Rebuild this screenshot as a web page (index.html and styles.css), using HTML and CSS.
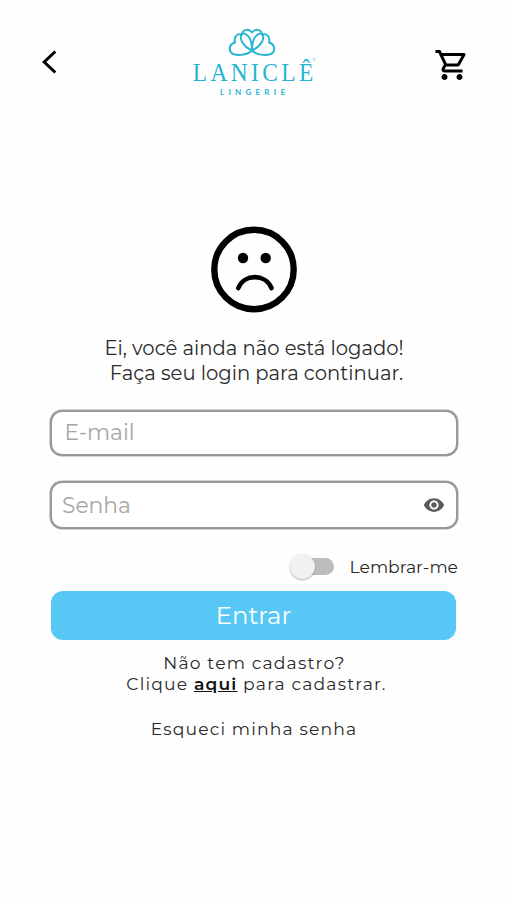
FILE: index.html
```html
<!DOCTYPE html>
<html lang="pt-BR">
<head>
  <meta charset="UTF-8" />
  <meta name="viewport" content="width=device-width, initial-scale=1.0" />
  <title>Laniclê Lingerie</title>
  <link rel="stylesheet" href="styles.css">
</head>
<body>
  <header class="topbar">
    <a href="#" class="back" aria-label="Voltar">
      <svg width="18" height="28" viewBox="0 0 18 28"><path d="M15.3 3.5 4.2 14l11.1 10.5" fill="none" stroke="#000" stroke-width="3"/></svg>
    </a>
    <svg class="logo" width="130" height="74" viewBox="0 0 130 74">
      <g fill="none" stroke="#27b4d2" stroke-width="1.9" stroke-linecap="round" stroke-linejoin="round">
        <path d="M62 25.5C57 30.500 45 31.500 41 27.500C38 23.500 40.500 18.500 45 17.500C43.500 12 47 8 52 9.500"/>
        <path d="M62 25.500C67 30.500 79 31.500 83 27.500C86 23.500 83.500 18.500 79 17.500C80.500 12 77 8 72 9.500"/>
        <path d="M62 25.500C53 21.500 48.500 13 52 9C54.500 7 59 11 60.500 15C62 19 62 22 62 25.500Z"/>
        <path d="M62 25.500C71 21.500 75.500 13 72 9C69.500 7 65 11 63.500 15C62 19 62 22 62 25.500Z"/>
        <path d="M52 9C53 4 59 3.500 62 7.500C65 3.500 71 4 72 9"/>
      </g>
      <text class="logo-name" x="3" y="56" textLength="134" lengthAdjust="spacing" transform="scale(.9 1)">LANICLÊ</text>
      <text class="logo-sub" x="30" y="70" textLength="65" lengthAdjust="spacing">LINGERIE</text>
      <text class="logo-mark" x="122.500" y="36">®</text>
    </svg>
    <a href="#" class="cart" aria-label="Carrinho">
      <svg width="36" height="36" viewBox="0 0 24 24"><path d="M15.55 13c.75 0 1.41-.41 1.75-1.03l3.58-6.49A.996.996 0 0 0 20.01 4H5.21l-.94-2H1v2h2l3.6 7.59-1.35 2.44C4.52 15.37 5.48 17 7 17h12v-2H7l1.1-2h7.45zM6.16 6h12.15l-2.76 5H8.53L6.16 6zM7 18c-1.1 0-1.99.9-1.99 2S5.9 22 7 22s2-.9 2-2-.9-2-2-2zm10 0c-1.1 0-1.99.9-1.99 2s.89 2 1.99 2 2-.9 2-2-.9-2-2-2z"/></svg>
    </a>
  </header>

  <main class="login">
    <svg class="sad" width="88" height="88" viewBox="0 0 88 88">
      <circle cx="44" cy="43.5" r="39.7" fill="none" stroke="#000" stroke-width="6.4"/>
      <circle cx="33" cy="32" r="5.2"/>
      <circle cx="55.7" cy="32" r="5.2"/>
      <path d="M28.3 62C34 47.5 55.5 47.5 61.5 62" fill="none" stroke="#000" stroke-width="4.6" stroke-linecap="round"/>
    </svg>
    <p class="message"><span class="line-1">Ei, você ainda não está logado!</span><br><span class="line-2">Faça seu login para continuar.</span></p>

    <form class="form">
      <div class="field field-email">
        <input type="email" placeholder="E-mail">
      </div>
      <div class="field field-senha">
        <input type="password" placeholder="Senha">
        <svg width="22" height="22" viewBox="0 0 24 24" fill="#5b5b5b"><path d="M12 4.5C7 4.5 2.73 7.61 1 12c1.73 4.39 6 7.5 11 7.5s9.27-3.11 11-7.5c-1.73-4.39-6-7.5-11-7.5zM12 17c-2.76 0-5-2.24-5-5s2.24-5 5-5 5 2.24 5 5-2.24 5-5 5zm0-8c-1.66 0-3 1.34-3 3s1.34 3 3 3 3-1.34 3-3-1.34-3-3-3z"/></svg>
      </div>
      <label class="remember">
        <span class="switch"><span class="knob"></span></span>
        <span class="remember-text">Lembrar-me</span>
      </label>
      <button type="button" class="submit">Entrar</button>
    </form>

    <p class="signup"><span class="signup-q">Não tem cadastro?</span><br>Clique <a href="#">aqui</a> para cadastrar.</p>
    <p class="forgot">Esqueci minha senha</p>
  </main>
</body>
</html>
```
FILE: styles.css
```css
* {
  box-sizing: border-box;
}
body {
  margin: 0;
  background: #fefefe;
  color: #2a2a2a;
  font-family: Montserrat, Inter, sans-serif;
  font-weight: 400;
}
p {
  margin: 0;
}
.topbar {
  display: flex;
  justify-content: space-between;
  align-items: flex-start;
  height: 226px;
  padding: 25px 37px 0 40px;
}
.back {
  margin-top: 23px;
}
.back svg,
.cart svg {
  display: block;
}
.logo {
  margin-left: 17px;
}
.cart {
  margin-top: 22px;
}
.logo text {
  fill: #27b4d2;
}
.logo-name {
  font-family: "Liberation Serif", serif;
  font-size: 26px;
}
.logo-sub {
  font-family: Lato, sans-serif;
  font-size: 8px;
  font-weight: 700;
}
.logo-mark {
  font-family: Lato, sans-serif;
  font-size: 4px;
}
.login {
  padding: 0 49px 0 50px;
  text-align: center;
}
.sad {
  display: block;
  margin: 0 auto;
}
.message {
  margin-top: 22px;
  font-size: 19.6px;
  line-height: 24.5px;
}
.line-2 {
  margin-left: 5px;
}
.form {
  margin-top: 25px;
}
.field {
  display: flex;
  align-items: center;
  border: 2px solid #999;
  border-radius: 12px;
  background: #fff;
  box-shadow: 0 0 0 0.5px #aaa;
}
.field input {
  flex: 1;
  min-width: 0;
  padding: 0;
  border: 0;
  outline: 0;
  background: none;
  font: 400 21.8px Montserrat, Inter, sans-serif;
}
.field input::placeholder {
  color: #a6a6a6;
}
.field-email {
  height: 46px;
  padding: 0 14px 2px 12.5px;
}
.field-senha {
  height: 48px;
  margin-top: 25px;
  padding: 0 11.5px 1px 10px;
}
.remember {
  display: flex;
  justify-content: flex-end;
  align-items: center;
  height: 28px;
  margin-top: 24px;
}
.switch {
  display: flex;
  align-items: center;
  width: 40px;
  height: 17px;
  margin: -2px 16px 0 0;
  border-radius: 9px;
  background: #bdbdbd;
}
.knob {
  width: 25px;
  height: 25px;
  margin-left: -4px;
  border-radius: 50%;
  background: #f1f1f1;
  box-shadow: 0 1px 2px rgba(0, 0, 0, 0.3);
}
.remember-text {
  margin-top: -2px;
  font-size: 17.2px;
}
.submit {
  display: block;
  width: 405px;
  height: 49px;
  margin: 10px 0 0 1px;
  padding: 0 0 2px;
  border: 0;
  border-radius: 12px;
  background: #57c8f5;
  color: #fff;
  font: 400 24.3px Montserrat, Inter, sans-serif;
}
.signup {
  margin: 12px -5px 0 0;
  font-size: 17.2px;
  line-height: 21px;
  letter-spacing: 1.15px;
}
.signup-q {
  margin-right: 4px;
}
.signup a {
  color: #111;
  font-weight: 600;
}
.forgot {
  margin-top: 24px;
  font-size: 17.2px;
  line-height: 21px;
  letter-spacing: 1.15px;
}
```
